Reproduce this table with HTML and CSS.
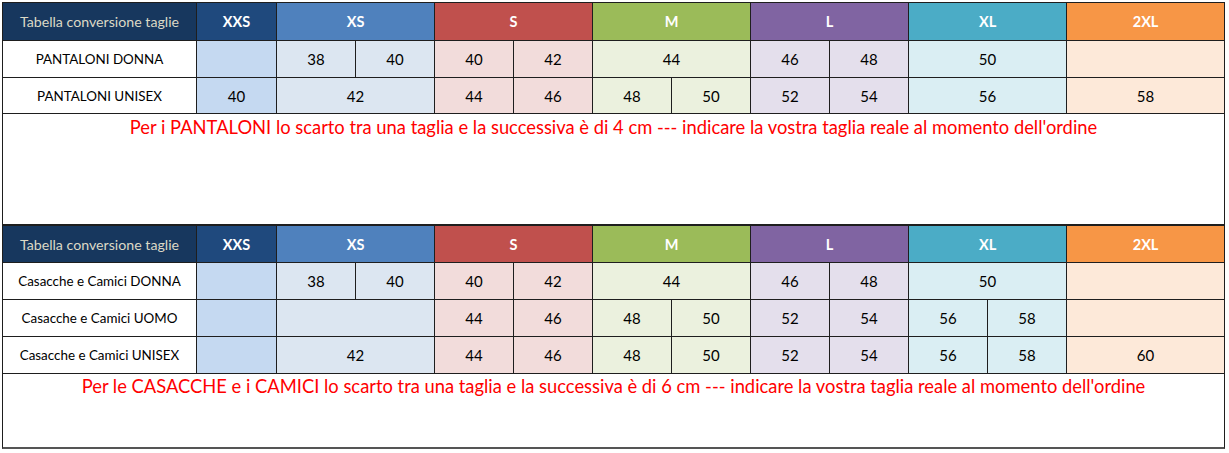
FILE: index.html
```html
<!DOCTYPE html>
<html lang="it">
<head>
<meta charset="utf-8">
<title>Tabella conversione taglie</title>
<link rel="stylesheet" href="styles.css">
</head>
<body>
<div class="sheet">
  <section class="block">
    <table class="sizes">
      <colgroup>
        <col class="c-label"><col class="c-xxs">
        <col class="c-half"><col class="c-half"><col class="c-half"><col class="c-half">
        <col class="c-half"><col class="c-half"><col class="c-half"><col class="c-half">
        <col class="c-half"><col class="c-half"><col class="c-half"><col class="c-half">
      </colgroup>
      <tr class="head head-1">
        <th class="h-title">Tabella conversione taglie</th>
        <th class="h-xxs">XXS</th>
        <th class="h-xs" colspan="2">XS</th>
        <th class="h-s" colspan="2">S</th>
        <th class="h-m" colspan="2">M</th>
        <th class="h-l" colspan="2">L</th>
        <th class="h-xl" colspan="2">XL</th>
        <th class="h-2xl" colspan="2">2XL</th>
      </tr>
      <tr class="row r1">
        <td class="label">PANTALONI DONNA</td>
        <td class="b-xxs"></td>
        <td class="b-xs">38</td><td class="b-xs">40</td>
        <td class="b-s">40</td><td class="b-s">42</td>
        <td class="b-m" colspan="2">44</td>
        <td class="b-l">46</td><td class="b-l">48</td>
        <td class="b-xl" colspan="2">50</td>
        <td class="b-2xl" colspan="2"></td>
      </tr>
      <tr class="row r2">
        <td class="label">PANTALONI UNISEX</td>
        <td class="b-xxs">40</td>
        <td class="b-xs" colspan="2">42</td>
        <td class="b-s">44</td><td class="b-s">46</td>
        <td class="b-m">48</td><td class="b-m">50</td>
        <td class="b-l">52</td><td class="b-l">54</td>
        <td class="b-xl" colspan="2">56</td>
        <td class="b-2xl" colspan="2">58</td>
      </tr>
    </table>
    <div class="note note-1">Per i PANTALONI lo scarto tra una taglia e la successiva è di 4 cm --- indicare la vostra taglia reale al momento dell'ordine</div>
  </section>

  <section class="block">
    <table class="sizes">
      <colgroup>
        <col class="c-label"><col class="c-xxs">
        <col class="c-half"><col class="c-half"><col class="c-half"><col class="c-half">
        <col class="c-half"><col class="c-half"><col class="c-half"><col class="c-half">
        <col class="c-half"><col class="c-half"><col class="c-half"><col class="c-half">
      </colgroup>
      <tr class="head head-2">
        <th class="h-title">Tabella conversione taglie</th>
        <th class="h-xxs">XXS</th>
        <th class="h-xs" colspan="2">XS</th>
        <th class="h-s" colspan="2">S</th>
        <th class="h-m" colspan="2">M</th>
        <th class="h-l" colspan="2">L</th>
        <th class="h-xl" colspan="2">XL</th>
        <th class="h-2xl" colspan="2">2XL</th>
      </tr>
      <tr class="row r3">
        <td class="label">Casacche e Camici DONNA</td>
        <td class="b-xxs"></td>
        <td class="b-xs">38</td><td class="b-xs">40</td>
        <td class="b-s">40</td><td class="b-s">42</td>
        <td class="b-m" colspan="2">44</td>
        <td class="b-l">46</td><td class="b-l">48</td>
        <td class="b-xl" colspan="2">50</td>
        <td class="b-2xl" colspan="2"></td>
      </tr>
      <tr class="row r3">
        <td class="label">Casacche e Camici UOMO</td>
        <td class="b-xxs"></td>
        <td class="b-xs" colspan="2"></td>
        <td class="b-s">44</td><td class="b-s">46</td>
        <td class="b-m">48</td><td class="b-m">50</td>
        <td class="b-l">52</td><td class="b-l">54</td>
        <td class="b-xl">56</td><td class="b-xl">58</td>
        <td class="b-2xl" colspan="2"></td>
      </tr>
      <tr class="row r3">
        <td class="label">Casacche e Camici UNISEX</td>
        <td class="b-xxs"></td>
        <td class="b-xs" colspan="2">42</td>
        <td class="b-s">44</td><td class="b-s">46</td>
        <td class="b-m">48</td><td class="b-m">50</td>
        <td class="b-l">52</td><td class="b-l">54</td>
        <td class="b-xl">56</td><td class="b-xl">58</td>
        <td class="b-2xl" colspan="2">60</td>
      </tr>
    </table>
    <div class="note note-2">Per le CASACCHE e i CAMICI lo scarto tra una taglia e la successiva è di 6 cm --- indicare la vostra taglia reale al momento dell'ordine</div>
  </section>
</div>
</body>
</html>
```

FILE: styles.css
```css
html, body {
  margin: 0;
  padding: 0;
  background: #ffffff;
}

body {
  font-family: Lato, "Open Sans", "Liberation Sans", sans-serif;
  color: #000000;
}

.sheet {
  padding: 2px 0 0 2px;
  width: 1223px;
}

.block {
  display: flex;
  flex-direction: column;
}

.sizes {
  border-collapse: collapse;
  table-layout: fixed;
  width: 1223px;
}

.c-label { width: 194px; }
.c-xxs { width: 80px; }
.c-half { width: 79px; }

.sizes th,
.sizes td {
  border: 1px solid #1e1e1e;
  padding: 0;
  text-align: center;
  vertical-align: middle;
  white-space: nowrap;
  overflow: hidden;
}

.head-1 { height: 38px; }
.head-2 { height: 37px; }
.head th {
  font-weight: 700;
  font-size: 14.5px;
  color: #ffffff;
}

.r1 { height: 37px; }
.r2 { height: 36px; }
.r3 { height: 37px; }

.row td {
  font-size: 15px;
}

.h-title {
  background: #17375e;
  color: #dcd9c6 !important;
  font-weight: 400 !important;
  font-size: 14.2px !important;
}
.h-xxs { background: #1f497d; }
.h-xs  { background: #4f81bd; }
.h-s   { background: #c0504d; }
.h-m   { background: #9bbb59; }
.h-l   { background: #8064a2; }
.h-xl  { background: #4bacc6; }
.h-2xl { background: #f79646; }

.label {
  background: #ffffff;
  font-size: 13.4px !important;
}
.b-xxs { background: #c5d9f1; }
.b-xs  { background: #dce6f1; }
.b-s   { background: #f2dcdb; }
.b-m   { background: #ebf1de; }
.b-l   { background: #e4dfec; }
.b-xl  { background: #daeef3; }
.b-2xl { background: #fde9d9; }

.note {
  border: 1px solid #1e1e1e;
  border-top: none;
  color: #ff0000;
  font-size: 18.35px;
  text-align: center;
  line-height: 24px;
  box-sizing: border-box;
}

.note-1 {
  height: 111px;
  padding-top: 1px;
}

.note-2 {
  height: 75px;
  padding-top: 0;
  border-bottom: 2px solid #555555;
}
```
